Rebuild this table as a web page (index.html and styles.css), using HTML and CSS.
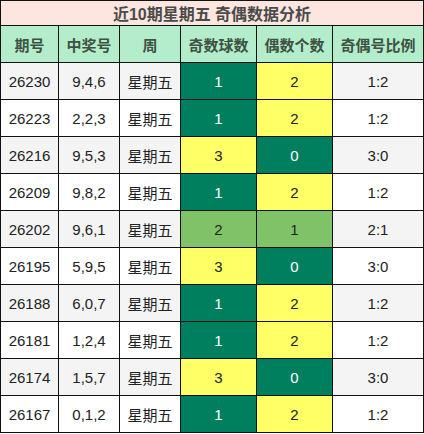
FILE: index.html
```html
<!DOCTYPE html>
<html lang="zh">
  <head>
    <meta charset="UTF-8" />
    <title>奇偶数据分析</title>
    <link rel="stylesheet" href="styles.css">
  </head>
  <body>
    <table class="stat">
      <colgroup>
        <col class="c-no">
        <col class="c-num">
        <col class="c-day">
        <col class="c-cnt">
        <col class="c-cnt">
        <col>
      </colgroup>
      <tr class="title"><td colspan="6">近10期星期五 奇偶数据分析</td></tr>
      <tr class="head">
        <th>期号</th><th>中奖号</th><th>周</th><th>奇数球数</th><th>偶数个数</th><th>奇偶号比例</th>
      </tr>
      <tr class="grey"><td>26230</td><td>9,4,6</td><td>星期五</td><td class="dark">1</td><td class="yel">2</td><td>1:2</td></tr>
      <tr><td>26223</td><td>2,2,3</td><td>星期五</td><td class="dark">1</td><td class="yel">2</td><td>1:2</td></tr>
      <tr class="grey"><td>26216</td><td>9,5,3</td><td>星期五</td><td class="yel">3</td><td class="dark">0</td><td>3:0</td></tr>
      <tr><td>26209</td><td>9,8,2</td><td>星期五</td><td class="dark">1</td><td class="yel">2</td><td>1:2</td></tr>
      <tr class="grey"><td>26202</td><td>9,6,1</td><td>星期五</td><td class="lite">2</td><td class="lite">1</td><td>2:1</td></tr>
      <tr><td>26195</td><td>5,9,5</td><td>星期五</td><td class="yel">3</td><td class="dark">0</td><td>3:0</td></tr>
      <tr class="grey"><td>26188</td><td>6,0,7</td><td>星期五</td><td class="dark">1</td><td class="yel">2</td><td>1:2</td></tr>
      <tr><td>26181</td><td>1,2,4</td><td>星期五</td><td class="dark">1</td><td class="yel">2</td><td>1:2</td></tr>
      <tr class="grey"><td>26174</td><td>1,5,7</td><td>星期五</td><td class="yel">3</td><td class="dark">0</td><td>3:0</td></tr>
      <tr><td>26167</td><td>0,1,2</td><td>星期五</td><td class="dark">1</td><td class="yel">2</td><td>1:2</td></tr>
    </table>
  </body>
</html>
```

FILE: styles.css
```css
* {
  margin: 0;
  padding: 0;
  box-sizing: border-box;
}
body {
  background: #fff;
  font-family: "Liberation Sans", "Noto Sans CJK SC", sans-serif;
}
.stat {
  width: 424px;
  border-collapse: collapse;
  table-layout: fixed;
  color: #222;
  font-size: 15px;
}
.c-no {
  width: 58px;
}
.c-num,
.c-day {
  width: 61px;
}
.c-cnt {
  width: 76px;
}
.stat td,
.stat th {
  border: 1px solid #111;
  text-align: center;
  height: 37px;
  padding: 0;
}
.title td {
  height: 25px;
  background: #fde6e0;
  color: #4a4a4a;
  font-weight: bold;
  font-size: 16px;
}
.head th {
  background: #b3edcb;
  color: #3e5244;
  font-weight: bold;
  font-size: 15px;
}
.grey td {
  background: #f4f4f4;
}
.stat td.dark {
  background: #007f5f;
  color: #fff;
}
.stat td.yel {
  background: #ffff66;
}
.stat td.lite {
  background: #80c268;
}
```
